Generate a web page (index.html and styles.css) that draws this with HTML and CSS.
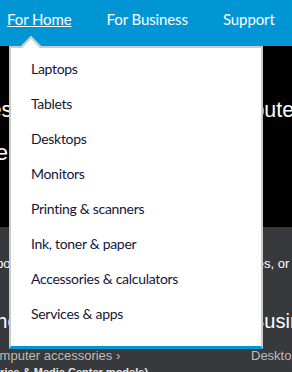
FILE: index.html
```html
<!DOCTYPE html>
<html lang="en">

<head>
    <meta charset="UTF-8">
    <meta name="viewport" content="width=device-width, initial-scale=1.0">
    <title>Shop for Home</title>
    <link rel="stylesheet" href="styles.css">
</head>

<body>

    <header class="top-bar">
        <nav class="main-nav">
            <a href="#" class="nav-link active">For Home</a>
            <a href="#" class="nav-link">For Business</a>
            <a href="#" class="nav-link">Support</a>
        </nav>

        <!-- Dropdown for "For Home" -->
        <div class="dropdown">
            <span class="dropdown-caret"></span>
            <ul class="dropdown-list">
                <li><a href="#">Laptops</a></li>
                <li><a href="#">Tablets</a></li>
                <li><a href="#">Desktops</a></li>
                <li><a href="#">Monitors</a></li>
                <li><a href="#">Printing &amp; scanners</a></li>
                <li><a href="#">Ink, toner &amp; paper</a></li>
                <li><a href="#">Accessories &amp; calculators</a></li>
                <li><a href="#">Services &amp; apps</a></li>
            </ul>
        </div>
    </header>

    <section class="hero">
        <h1 class="hero-title">Accessories for every new home computer</h1>
        <p class="hero-sub">The perfect device for you</p>
    </section>

    <section class="shop">
        <p class="shop-intro">Great for school, work, play, gaming, music, movies, hobbies, or creativity.</p>

        <div class="shop-columns">
            <div class="shop-col">
                <h2>Shop for home</h2>
                <a href="#" class="shop-link">Computer accessories ›</a>
                <p class="shop-note">(Series &amp; Media Center models)</p>
            </div>
            <div class="shop-col">
                <h2>Business</h2>
                <a href="#" class="shop-link">Desktops ›</a>
            </div>
        </div>
    </section>

</body>

</html>
```

FILE: styles.css
```css
body {
    margin: 0;
    font-family: "Liberation Sans", Arial, sans-serif;
    background-color: #38393c;
    overflow: hidden;
}

/* Blue top bar */
.top-bar {
    position: relative;
    height: 46px;
    background-color: #0096d6;
}

.main-nav {
    display: flex;
    gap: 35px;
    padding: 9px 0 0 7px;
}

.nav-link {
    font-family: Lato, "Open Sans", sans-serif;
    font-size: 15px;
    letter-spacing: -0.1px;
    line-height: 20px;
    color: #ffffff;
    text-decoration: none;
    white-space: nowrap;
}

.nav-link.active {
    text-decoration: underline;
}

/* Dropdown menu */
.dropdown {
    position: absolute;
    top: 46px;
    left: 9px;
    width: 250px;
    background-color: #ffffff;
    border: 2px solid #cbcbcb;
    border-bottom: 3px solid #0096d6;
    z-index: 10;
}

.dropdown-caret {
    position: absolute;
    top: -9px;
    left: 13px;
    width: 14px;
    height: 14px;
    background-color: #ffffff;
    border-top: 2px solid #cbcbcb;
    border-left: 2px solid #cbcbcb;
    box-sizing: border-box;
    transform: rotate(45deg);
}

.dropdown-list {
    list-style: none;
    margin: 0;
    padding: 3px 0 15px 20px;
}

.dropdown-list a {
    display: block;
    font-family: Lato, "Open Sans", sans-serif;
    font-size: 14px;
    letter-spacing: -0.3px;
    line-height: 35px;
    color: #15153a;
    text-decoration: none;
    white-space: nowrap;
}

/* Black hero band */
.hero {
    height: 181px;
    padding-top: 51px;
    box-sizing: border-box;
    background-color: #000000;
    color: #ffffff;
    white-space: nowrap;
}

.hero-title {
    margin: 0 0 17px -103px;
    font-size: 21.4px;
    font-weight: normal;
    line-height: 26px;
}

.hero-sub {
    margin: 0 0 0 -30px;
    font-size: 22px;
    line-height: 26px;
}

/* Grey shop section */
.shop {
    padding-top: 29px;
    color: #ffffff;
    white-space: nowrap;
}

.shop-intro {
    margin: 0 0 37px -79px;
    font-size: 13px;
    line-height: 16px;
}

.shop-columns {
    display: grid;
    grid-template-columns: 268px 268px;
    margin-left: -17px;
}

.shop-col h2 {
    margin: 0 0 15px;
    font-size: 20px;
    font-weight: normal;
    line-height: 24px;
}

.shop-link {
    display: block;
    font-size: 13px;
    line-height: 16px;
    color: #bdbdbd;
    text-decoration: none;
}

.shop-note {
    margin: 1px 0 0;
    font-size: 11px;
    font-weight: bold;
    line-height: 14px;
    color: #e6e6e6;
}
```
